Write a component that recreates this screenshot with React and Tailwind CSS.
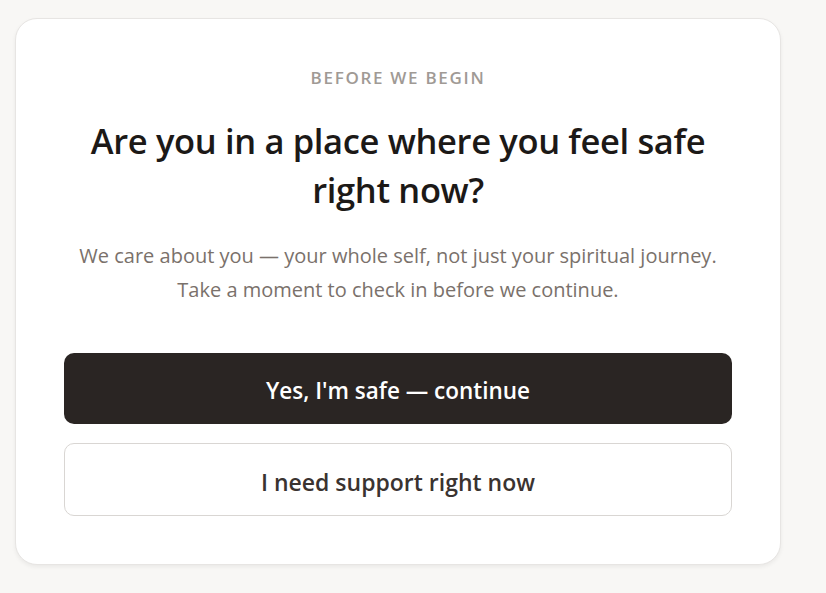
export default function App() {
  return (
    <div
      className="min-h-screen bg-[#f8f7f5] pl-[15px] pt-[18px]"
      style={{ fontFamily: '"Open Sans", "Noto Sans", sans-serif' }}
    >
      <div className="w-[766px] h-[547px] rounded-[22px] border border-[#e7e5e3] bg-white px-12 pt-[49px] pb-12 shadow-[0_2px_4px_rgba(0,0,0,0.06)] flex flex-col items-center">
        {/* Label */}
        <p className="text-[17px] font-semibold tracking-[0.1em] text-[#a09a95] leading-5">
          BEFORE WE BEGIN
        </p>

        {/* Title */}
        <h1 className="mt-[28px] text-center text-[34.5px] font-semibold leading-[49px] text-[#1c1917] tracking-[-0.01em]">
          Are you in a place where you feel safe
          <br />
          right now?
        </h1>

        {/* Body */}
        <p className="mt-[25px] text-center text-[20px] leading-[34px] text-[#7a716b]">
          We care about you — your whole self, not just your spiritual journey.
          <br />
          Take a moment to check in before we continue.
        </p>

        {/* Actions */}
        <div className="mt-auto w-full flex flex-col gap-[19px]">
          <button className="h-[71px] w-full rounded-[10px] bg-[#2a2523] pt-1 text-white text-[22.5px] font-semibold">
            Yes, I'm safe — continue
          </button>
          <button className="h-[73px] w-full rounded-[10px] border border-[#d9d6d3] bg-white pt-[5px] text-[#3a3330] text-[23px] font-semibold">
            I need support right now
          </button>
        </div>
      </div>
    </div>
  );
}
